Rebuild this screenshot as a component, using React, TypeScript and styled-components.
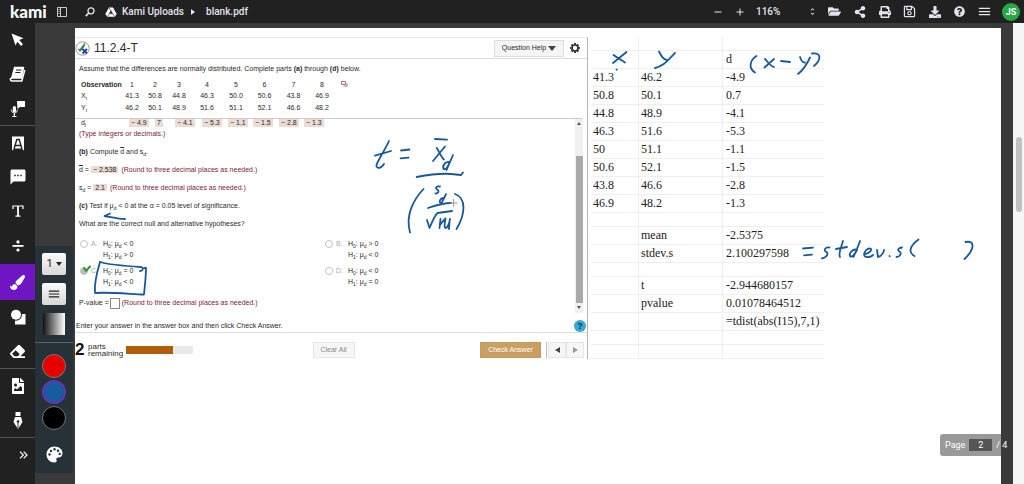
import React from "react";
import styled, { createGlobalStyle } from "styled-components";
import {
  FaFolderOpen,
  FaShareAlt,
  FaPrint,
  FaRegSave,
  FaDownload,
  FaQuestionCircle,
  FaPaintBrush,
  FaEraser,
  FaFileImage,
} from "react-icons/fa";
import { MdMenu, MdTextsms, MdAdd, MdRemove, MdUnfoldMore } from "react-icons/md";

const GlobalStyle = createGlobalStyle`
  * { box-sizing: border-box; }
  body { margin: 0; background: #3a3a3a; font-family: "Liberation Sans", Arial, sans-serif; }
  button, input, select { font: inherit; color: inherit; margin: 0; padding: 0; border: 0; background: none; }
  svg { display: block; }
`;

const Shell = styled.div`
  display: flex;
  flex-direction: column;
  min-height: 100vh;
`;

/* ---------- top bar ---------- */

const TopBar = styled.header`
  display: flex;
  align-items: center;
  height: 23px;
  padding: 0 4px 0 10px;
  background: #212121;
  color: #e4e4ee;
  font: 500 10px/12px Roboto, "Liberation Sans", sans-serif;
`;

const Logo = styled.a`
  width: 46px;
  color: #fff;
  font: 900 17px/20px Lato, sans-serif;
  text-decoration: none;
`;

const IconButton = styled.button<{ $w?: number }>`
  display: flex;
  align-items: center;
  justify-content: center;
  width: ${(p) => p.$w ?? 25}px;
  height: 22px;
`;

const LeftTools = styled.div`
  display: flex;
  gap: 16px;
`;

const Crumbs = styled.nav`
  display: flex;
  align-items: center;
  margin-left: 9px;

  a {
    margin-left: 5px;
    color: inherit;
    text-decoration: none;
  }
`;

const CrumbArrow = styled.span`
  margin: 0 11px 0 7px;
  border: 3px solid transparent;
  border-left: 4px solid #e4e4ee;
  border-right: 0;
`;

const Spacer = styled.div`
  flex: 1;
`;

const ZoomBox = styled.label`
  display: flex;
  align-items: center;
  justify-content: space-between;
  width: 61px;
  margin: 0 5px 0 5px;

  select {
    flex: 1;
    appearance: none;
    font-size: 10px;
  }
`;

const Avatar = styled.button`
  width: 18px;
  height: 18px;
  margin-left: 5px;
  border-radius: 50%;
  background: #2aa745;
  color: #fff;
  font: 700 9px/18px Roboto, sans-serif;
`;

/* ---------- left tools ---------- */

const Workspace = styled.div`
  display: flex;
  flex: 1;
`;

const Rail = styled.aside`
  width: 35px;
  background: #212121;
  color: #fff;
`;

const Group = styled.div`
  border-bottom: 1px solid #555;
`;

const Tool = styled.button<{ $tall?: boolean; $active?: boolean; $end?: boolean }>`
  display: flex;
  align-items: center;
  justify-content: ${(p) => (p.$end ? "flex-end" : "center")};
  width: 100%;
  height: ${(p) => (p.$tall ? 36 : 34)}px;
  padding-right: ${(p) => (p.$end ? 7 : 0)}px;
  background: ${(p) => (p.$active ? "#6f16c4" : "transparent")};
`;

const Gutter = styled.div`
  width: 40px;
  padding: 223px 2px 0 0;
`;

const Palette = styled.div`
  display: flex;
  flex-direction: column;
  align-items: center;
  height: 227px;
  padding-top: 7px;
  background: #263237;
`;

const PenButton = styled.button`
  display: flex;
  align-items: center;
  justify-content: center;
  gap: 3px;
  width: 24px;
  height: 22px;
  margin-bottom: 8px;
  border-radius: 2px;
  background: linear-gradient(#fafafa, #d8d8d8);
  color: #222;
  font: 11px/22px Roboto, sans-serif;
`;

const Caret = styled.span`
  border: 3px solid transparent;
  border-top: 4px solid #222;
  border-bottom: 0;
`;

const Opacity = styled.button`
  width: 22px;
  height: 22px;
  background: linear-gradient(90deg, #111, #fff);
`;

const PaletteRule = styled.hr`
  width: 100%;
  margin: 7px 0 11px;
  border: 0;
  border-top: 1px solid #5a6468;
`;

const Swatch = styled.button<{ $color: string; $on?: boolean }>`
  width: 24px;
  height: 24px;
  margin-bottom: 2px;
  border: ${(p) => (p.$on ? "2px solid #5f35b5" : "1px solid #777")};
  border-radius: 50%;
  background: ${(p) => p.$color};
`;

const MoreColors = styled.button`
  margin-top: 14px;
  color: #fff;
`;

/* ---------- document ---------- */

const Page = styled.main`
  position: relative;
  display: flex;
  align-items: flex-start;
  flex: 1;
  margin-top: 5px;
  padding-top: 9px;
  background: #fff;
  overflow: hidden;
`;

const RightGutter = styled.div`
  width: 12px;
`;

const ScrollTrack = styled.div`
  width: 11px;
  padding: 114px 2px 0 3px;
  background: #f7f7f7;
`;

const ScrollThumb = styled.div`
  height: 75px;
  border-radius: 3px;
  background: #c1c1c1;
`;

const Ink = styled.svg`
  position: absolute;
  top: 0;
  left: 0;
  pointer-events: none;
`;

const PageBadge = styled.label`
  position: absolute;
  right: 18px;
  bottom: 28px;
  display: flex;
  align-items: center;
  gap: 4px;
  height: 22px;
  width: 66px;
  padding-left: 5px;
  border-radius: 3px;
  background: rgba(60, 60, 60, 0.52);
  color: #fff;
  font: 9px/12px Roboto, sans-serif;
  white-space: nowrap;

  input {
    width: 23px;
    height: 12px;
    background: #555;
    text-align: center;
  }
`;

/* ---------- exercise ---------- */

const Exercise = styled.section`
  flex: 0 0 513px;
  height: 322px;
  border-top: 1px solid #e8e8e8;
  border-right: 1px solid #b5b5b5;
  color: #2b2b2b;
  font-size: 7px;
  line-height: 10px;
`;

const ExHead = styled.div`
  display: flex;
  align-items: center;
  height: 21px;
  padding-right: 7px;
  border-bottom: 1px solid #ddd;
`;

const Title = styled.h1`
  flex: 1;
  margin: 0 0 0 4px;
  font-size: 12px;
  line-height: 14px;
  font-weight: 400;
`;

const HelpButton = styled.button`
  display: flex;
  align-items: center;
  justify-content: center;
  gap: 2px;
  width: 70px;
  height: 17px;
  margin-right: 6px;
  border: 1px solid #ddd;
  background: #f5f5f5;
`;

const DownArrow = styled.span`
  border: 4px solid transparent;
  border-top: 5px solid #444;
  border-bottom: 0;
`;

const Given = styled.div`
  height: 59px;
  padding: 5px 0 0 4px;

  p {
    margin: 0 0 6px;
  }
`;

const ObsTable = styled.table`
  table-layout: fixed;
  width: 273px;
  border-spacing: 0;

  th,
  td {
    height: 12px;
    padding: 0;
    text-align: center;
    font-weight: 400;
    line-height: 10px;
  }
  tbody th,
  thead th:first-child {
    padding-left: 2px;
    text-align: left;
  }
  thead th:first-child {
    font-weight: 700;
  }
  thead th {
    height: 10px;
  }
  sub {
    font-size: 5px;
    line-height: 1px;
  }
`;

const ScrollArea = styled.div`
  display: flex;
  height: 195px;
  margin-right: 4px;
  border-top: 1px solid #ccc;
`;

const Questions = styled.div`
  flex: 1;
  padding-left: 4px;
`;

const DiffRow = styled.div`
  display: grid;
  grid-template-columns: 50px 26px 20px 27px 26px 25px 26px 25px 18px;
  height: 8px;
  margin-bottom: 2px;
  line-height: 8px;

  sub {
    font-size: 5px;
    line-height: 1px;
  }
`;

const Answer = styled.span<{ $inline?: boolean }>`
  justify-self: start;
  padding: 0 2px;
  background: #ecdcd3;
  white-space: nowrap;
  margin-right: ${(p) => (p.$inline ? 3 : 0)}px;
`;

const Line = styled.p<{ $note?: boolean }>`
  margin: 0 0 8px;
  color: ${(p) => (p.$note ? "#7a2438" : "inherit")};
  height: 10px;

  sub {
    font-size: 5px;
    line-height: 1px;
  }
`;

const Note = styled.span`
  color: #7a2438;
`;

const Over = styled.span`
  text-decoration: overline;
`;

const Choices = styled.div`
  display: grid;
  grid-template-columns: 245px 1fr;
  row-gap: 5px;
  margin-bottom: 11px;
  padding-top: 1px;
`;

const Choice = styled.label`
  display: flex;
  line-height: 11px;

  input {
    appearance: none;
    width: 8px;
    height: 8px;
    margin: 2px 3px 0 1px;
    border: 1px solid #c4c4c4;
    border-radius: 50%;
  }
  input:checked {
    background: #bbb;
  }
  sub {
    font-size: 5px;
    line-height: 1px;
  }
`;

const Letter = styled.span`
  width: 12px;
  color: #aaa;
`;

const Blank = styled.input`
  && {
    width: 10px;
    height: 11px;
    margin: 0 2px 0 1px;
    border: 1px solid #888;
    vertical-align: middle;
  }
`;

const InnerTrack = styled.div`
  display: flex;
  flex-direction: column;
  align-items: center;
  width: 8px;
  padding: 3px 0;
  background: #f0f0f0;
`;

const InnerThumb = styled.div`
  width: 7px;
  height: 147px;
  margin: 31px 0 3px;
  background: #a9a9a9;
`;

const TinyArrow = styled.span<{ $down?: boolean }>`
  border: 2px solid transparent;
  border-${(p) => (p.$down ? "top" : "bottom")}: 3px solid #555;
  border-${(p) => (p.$down ? "bottom" : "top")}: 0;
`;

const Prompt = styled.div`
  display: flex;
  align-items: center;
  justify-content: space-between;
  height: 20px;
  padding: 6px 1px 0 1px;
  border-bottom: 1px solid #ddd;
`;

const RoundHelp = styled.button`
  width: 12px;
  height: 12px;
  border-radius: 50%;
  background: #35a9d6;
  color: #12344a;
  font: 700 9px/12px "Liberation Sans", sans-serif;
`;

const Footer = styled.div`
  display: flex;
  align-items: center;
  height: 25px;
  padding: 8px 3px 0 0;
`;

const Count = styled.strong`
  width: 13px;
  color: #111;
  font-size: 17px;
  line-height: 18px;
`;

const Remaining = styled.span`
  width: 38px;
  font-size: 8px;
  line-height: 7px;
`;

const Progress = styled.div`
  width: 67px;
  height: 8px;
  background: #e9e9e9;
`;

const ProgressFill = styled.div`
  width: 70%;
  height: 100%;
  background: #b05d08;
`;

const FootButton = styled.button<{ $kind?: "clear" | "primary" | "step" }>`
  display: flex;
  align-items: center;
  justify-content: center;
  width: ${(p) => (p.$kind === "primary" ? 61 : p.$kind === "step" ? 18 : 42)}px;
  height: 16px;
  margin-right: ${(p) => (p.$kind === "clear" ? 6 : 0)}px;
  border: 1px solid ${(p) => (p.$kind === "primary" ? "#c4995a" : "#e6e6e6")};
  background: ${(p) => (p.$kind === "primary" ? "#c9a064" : "#f6f6f6")};
  color: ${(p) => (p.$kind === "primary" ? "#fff" : "#888")};
`;

const Steps = styled.div`
  display: flex;
  margin-left: 5px;
  padding-left: 1px;
  border-left: 1px solid #bbb;
`;

const StepArrow = styled.span<{ $next?: boolean }>`
  border: 3px solid transparent;
  border-${(p) => (p.$next ? "left" : "right")}: 5px solid ${(p) => (p.$next ? "#999" : "#444")};
  border-${(p) => (p.$next ? "right" : "left")}: 0;
`;

/* ---------- spreadsheet ---------- */

const Sheet = styled.table`
  table-layout: fixed;
  width: 233px;
  margin-left: 3px;
  border-spacing: 0;
  color: #222;
  font: 12px/17px "Liberation Serif", "Times New Roman", serif;

  td {
    padding: 0 0 0 2px;
    border-right: 1px solid #efefef;
    border-bottom: 1px solid #efefef;
    white-space: nowrap;
  }
  td:last-child {
    border-right: 0;
    padding-left: 3px;
  }
`;

const SheetRow = styled.tr<{ $empty?: boolean }>`
  height: ${(p) => (p.$empty ? 14 : 18)}px;
`;

const sheetRows: string[][] = [
  [],
  ["", "", "d"],
  ["41.3", "46.2", "-4.9"],
  ["50.8", "50.1", "0.7"],
  ["44.8", "48.9", "-4.1"],
  ["46.3", "51.6", "-5.3"],
  ["50", "51.1", "-1.1"],
  ["50.6", "52.1", "-1.5"],
  ["43.8", "46.6", "-2.8"],
  ["46.9", "48.2", "-1.3"],
  [],
  ["", "mean", "-2.5375"],
  ["", "stdev.s", "2.100297598"],
  [],
  ["", "t", "-2.944680157"],
  ["", "pvalue", "0.01078464512"],
  ["", "", "=tdist(abs(I15),7,1)"],
  [],
  [],
];

const observed: [string, string[]][] = [
  ["X", ["41.3", "50.8", "44.8", "46.3", "50.0", "50.6", "43.8", "46.9"]],
  ["Y", ["46.2", "50.1", "48.9", "51.6", "51.1", "52.1", "46.6", "48.2"]],
];
const diffs = ["− 4.9", "7", "− 4.1", "− 5.3", "− 1.1", "− 1.5", "− 2.8", "− 1.3"];
const obsWidths = [41, 24, 22, 26, 30, 28, 29, 29, 28, 16];

const choices = [
  { id: "A", h0: "< 0", h1: "> 0" },
  { id: "B", h0: "> 0", h1: "< 0" },
  { id: "C", h0: "= 0", h1: "< 0" },
  { id: "D", h0: "< 0", h1: "= 0" },
];

const strokes = [
  /* t = x̄d over s/√n */
  "M389 141C385 150 378 160 376.500 165C376 169 381 169 384 164M375 155.700L391 151",
  "M401 150.500L409.500 149.500M400.500 158.300L408.500 157.700",
  "M435 139L447 139.700M436.700 148C439 151 441 157 444 159.500M445 146.500L433 161",
  "M453 155C451 160 448 166 446.500 170M449.500 162C446 161 442 165 443.500 169C446 170 448 167 449.500 162",
  "M416.700 177C430 174.500 440 173 451 174L461 175L463 172.500",
  "M440 186.500C436 186 435 188 437 189.500C440 191 438 193.500 435.500 193.500",
  "M446 194C445 197 443 200 441.500 203M443.500 198C440 198 438.500 203 441 203",
  "M428 208C437 205 446 203 451 203",
  "M427 220L429.500 228C432 222 435 215 437.500 213L452 211",
  "M440.500 219L439.500 228M440 225C442 222 444 220 445.500 218.500C445 222 443.500 228 446 228C448 227 449.500 222 450 219M449.500 222L449 229",
  "M423.500 189C414 199 405 215 410 232.500M455 194C467 198 465 215 456.500 229",
  /* column headings */
  "M626.500 52L613 63M613.500 55C618 58 621 60 625 62.500",
  "M659 51.500C661 55 662 59 667 60M675 53C668 60 664 66 655 68",
  "M756.500 56C750 60 748 68 755 72.500M765 59C768 62 770 66 774 67M774 59L764.500 67.500M781 61L790 62",
  "M800 57C801 60 802 63 805 62.500M810 57.500C807 64 802 71 798 74M812 53.500C822 52 821 60 814 66",
  /* = stdev.s( ) */
  "M803 248.500L813 247.700M804 255.300L812 254.700",
  "M829.500 247.500C825 247 823 250.500 826.500 252C829 254 826 258 822 258.500",
  "M843 241C841 248 838 254 840 257M836 249L847 247",
  "M860 241C858 247 855 253 853.500 257M857 250C853 248 848 254 850.500 256.500C853 257 855 254 857 250",
  "M864 254C868 254 872 251 871 249C868 247 863 252 864.500 256C867 258 871 257 873 255",
  "M877 250L878 257C881 257 884 252 884 250M889.500 256L889.600 256.300",
  "M902 247.500C898 248 897 250 899.500 251.500C902 253 900 257 896.500 257",
  "M918.500 239.500C911 245 907 252 914.500 256M965.500 242C976 240 974 250 964.500 259",
  /* marks on the exercise */
  "M110 213.500L104.500 216C111 217 118 219 125 219",
  "M100 262C97 272 94 283 95 293C110 292 130 294 144 294.500C145 285 146 276 146 268L144 268",
  "M100 262C110 265 125 266 141 267C144 268 143 271 140 271",
];

const CursorIcon = () => (
  <svg width="13" height="14" viewBox="0 0 13 14" fill="#fff">
    <path d="M0.500 0.500L12.500 5.200L8.200 7L12 11.200L10 13L6.300 8.800L4.500 12.500Z" />
  </svg>
);
const BookIcon = () => (
  <svg width="17" height="17" viewBox="0 0 17 17">
    <path d="M5 1.500H14.500L12 12H3.500Q1.500 12 1.300 13Q1.300 14.800 3 15H12.800L15.800 4" fill="none" stroke="#fff" strokeWidth="1.500" strokeLinejoin="round" />
    <path d="M5 1H14.800L12 12H2Z" fill="#fff" />
    <path d="M7 4H12.500M6.300 6.500H11.500" stroke="#212121" strokeWidth="1" />
  </svg>
);
const MicIcon = () => (
  <svg width="15" height="17" viewBox="0 0 15 17" fill="#fff">
    <rect x="2.800" y="6" width="3.200" height="6.500" rx="1.600" />
    <path d="M1.300 9.500Q1.300 13 4.400 13Q7.500 13 7.500 9.500" fill="none" stroke="#fff" strokeWidth="0.800" />
    <path d="M3.800 13H5V16H6.500V17H2.300V16H3.800ZM7 1H15V7H10L7.500 9Z" />
  </svg>
);
const MarkIcon = () => (
  <svg width="12" height="15" viewBox="0 0 12 15">
    <path d="M0 0.500H12V14.500L9.500 12.500H2.500L0 14.500Z" fill="#fff" />
    <path d="M2 13L4.800 3.500H7.200L10 13M3.300 9.500H8.700" fill="none" stroke="#212121" strokeWidth="1.400" />
  </svg>
);
const TypeIcon = () => (
  <svg width="12" height="12" viewBox="0 0 12 12" fill="none" stroke="#fff">
    <path d="M6 1V11" strokeWidth="1.800" />
    <path d="M1 4V1H11V4M3.500 11.200H8.500" strokeWidth="1.200" />
  </svg>
);
const DivideIcon = () => (
  <svg width="12" height="12" viewBox="0 0 12 12" fill="#fff">
    <rect x="0.500" y="5" width="11" height="1.800" />
    <circle cx="6" cy="1.900" r="1.600" />
    <circle cx="6" cy="10" r="1.600" />
  </svg>
);
const ShapesIcon = () => (
  <svg width="16" height="16" viewBox="0 0 16 16">
    <path d="M7 5H15.500V15.500H5V9Z" fill="#fff" />
    <circle cx="6" cy="5.800" r="6" fill="#212121" />
    <circle cx="6" cy="5.800" r="5" fill="#fff" />
  </svg>
);
const PenIcon = () => (
  <svg width="10" height="17" viewBox="0 0 10 17">
    <path d="M2.500 0H7.500V4H2.500ZM2 5H8L9.500 10L5 17L0.500 10Z" fill="#fff" />
    <path d="M5 10V16" stroke="#212121" strokeWidth="0.900" />
    <circle cx="5" cy="9.500" r="1.300" fill="#212121" />
  </svg>
);
const ChevronsIcon = () => (
  <svg width="9" height="8" viewBox="0 0 9 8" fill="none" stroke="#fff" strokeWidth="1.200">
    <path d="M1 0.700L4.300 4L1 7.300M4.700 0.700L8 4L4.700 7.300" />
  </svg>
);
const PaletteIcon = () => (
  <svg width="17" height="17" viewBox="0 0 17 17">
    <path d="M8.500 0.500C13 0.500 16.500 3.300 16.500 7.200C16.500 10 14.500 11.500 12.300 11.500C10.500 11.500 9.800 12.500 10.500 13.800C11.200 15.200 10.200 16.500 8.500 16.500C4 16.500 0.500 13 0.500 8.500C0.500 4 4 0.500 8.500 0.500Z" fill="#fff" />
    <g fill="#263237">
      <circle cx="3.500" cy="8.500" r="1.200" />
      <circle cx="5" cy="5" r="1.200" />
      <circle cx="8.500" cy="3.300" r="1.200" />
      <circle cx="12" cy="4.800" r="1.200" />
      <circle cx="13.700" cy="7.900" r="1.200" />
    </g>
  </svg>
);
const PanelIcon = () => (
  <svg width="10" height="10" viewBox="0 0 10 10" fill="none" stroke="#c8c8d0">
    <path d="M0.500 0.500H9.500V9.500H0.500ZM3.500 0.500V9.500" />
    <path d="M1 2.500H3M1 4.500H3M1 6.500H3" strokeWidth="0.600" />
  </svg>
);
const SearchIcon = () => (
  <svg width="10" height="10" viewBox="0 0 10 10" fill="none" stroke="#e4e4ee" strokeWidth="1.300">
    <circle cx="6" cy="3.800" r="3" />
    <path d="M3.800 6L0.700 9.200" strokeWidth="1.700" />
  </svg>
);
const DriveIcon = () => (
  <svg width="12" height="10" viewBox="0 0 12 10">
    <path d="M4 0.500H8L11.700 7L9.800 9.700H2.200L0.300 7Z" fill="#fff" />
    <path d="M4.200 1L7.500 6.700M9.600 9.500L8 6.700H4.300L2.400 9.500M4.300 6.700L6.200 3.600" stroke="#212121" strokeWidth="0.600" fill="none" />
    <path d="M6 3.800L7.500 6.500H4.500Z" fill="#212121" />
  </svg>
);
const GearIcon = () => (
  <svg width="10" height="10" viewBox="-6 -6 12 12" fill="none" stroke="#333">
    <circle r="3.600" strokeWidth="2" />
    {[0, 45, 90, 135].map((a) => (
      <path key={a} d="M0 -5.900V-4M0 5.900V4" strokeWidth="2.400" transform={`rotate(${a})`} />
    ))}
  </svg>
);
const TitleIcon = () => (
  <svg width="15" height="15" viewBox="0 0 15 15" fill="none">
    <circle cx="7.500" cy="7.500" r="6.700" fill="#fff" stroke="#999" />
    <path d="M3 8L5 9L10 2.500M4.500 10.500L9.500 4.500" stroke="#2c8a3c" strokeWidth="1.300" />
    <path d="M7.500 8L12 12.500M12 8L7.500 12.500" stroke="#2b35b8" strokeWidth="1.900" />
  </svg>
);
const PopupIcon = () => (
  <svg width="8" height="7" viewBox="0 0 8 7" fill="none" stroke="#b0475a" strokeWidth="0.800">
    <path d="M1.500 1.500H5.500V4.500H1.500ZM3.500 6H7V3" />
  </svg>
);

export default function App() {
  return (
    <Shell>
      <GlobalStyle />
      <TopBar>
        <Logo href="#">kami</Logo>
        <LeftTools>
          <IconButton $w={12} aria-label="Toggle sidebar"><PanelIcon /></IconButton>
          <IconButton $w={12} aria-label="Search"><SearchIcon /></IconButton>
        </LeftTools>
        <Crumbs>
          <DriveIcon />
          <a href="#">Kami Uploads</a>
          <CrumbArrow />
          <span>blank.pdf</span>
        </Crumbs>
        <Spacer />
        <IconButton $w={22} aria-label="Zoom out"><MdRemove size={12} /></IconButton>
        <IconButton $w={22} aria-label="Zoom in"><MdAdd size={12} /></IconButton>
        <ZoomBox>
          <select aria-label="Zoom level" defaultValue="116%"><option>116%</option></select>
          <MdUnfoldMore size={9} />
        </ZoomBox>
        <IconButton aria-label="Open"><FaFolderOpen size={13} /></IconButton>
        <IconButton aria-label="Share"><FaShareAlt size={12} /></IconButton>
        <IconButton aria-label="Print"><FaPrint size={12} /></IconButton>
        <IconButton aria-label="Save"><FaRegSave size={13} /></IconButton>
        <IconButton aria-label="Download"><FaDownload size={12} /></IconButton>
        <IconButton aria-label="Help"><FaQuestionCircle size={11} /></IconButton>
        <IconButton aria-label="Menu"><MdMenu size={15} /></IconButton>
        <Avatar>JS</Avatar>
      </TopBar>

      <Workspace>
        <Rail>
          <Group>
            <Tool aria-label="Select"><CursorIcon /></Tool>
            <Tool aria-label="Dictionary"><BookIcon /></Tool>
            <Tool aria-label="Read aloud"><MicIcon /></Tool>
          </Group>
          <div>
            <Tool aria-label="Markup"><MarkIcon /></Tool>
            <Tool aria-label="Comment"><MdTextsms size={18} /></Tool>
            <Tool aria-label="Text box"><TypeIcon /></Tool>
            <Tool $tall aria-label="Equation"><DivideIcon /></Tool>
            <Tool $tall $active aria-label="Drawing"><FaPaintBrush size={15} /></Tool>
            <Tool aria-label="Shapes"><ShapesIcon /></Tool>
          </div>
          <Group>
            <Tool aria-label="Eraser"><FaEraser size={15} /></Tool>
          </Group>
          <Group>
            <Tool aria-label="Image"><FaFileImage size={16} /></Tool>
            <Tool aria-label="Signature"><PenIcon /></Tool>
          </Group>
          <Tool $end aria-label="Expand"><ChevronsIcon /></Tool>
        </Rail>

        <Gutter>
          <Palette>
            <PenButton aria-label="Stroke size">1<Caret /></PenButton>
            <PenButton aria-label="Stroke style"><MdMenu size={14} /></PenButton>
            <Opacity aria-label="Opacity" />
            <PaletteRule />
            <Swatch $color="#e60000" aria-label="Red" />
            <Swatch $color="#175c9c" $on aria-label="Blue" />
            <Swatch $color="#000" aria-label="Black" />
            <MoreColors aria-label="More colors"><PaletteIcon /></MoreColors>
          </Palette>
        </Gutter>

        <Page>
          <Exercise>
            <ExHead>
              <TitleIcon />
              <Title>11.2.4-T</Title>
              <HelpButton>Question Help <DownArrow /></HelpButton>
              <button aria-label="Settings"><GearIcon /></button>
            </ExHead>
            <Given>
              <p>
                Assume that the differences are normally distributed. Complete parts <b>(a)</b> through <b>(d)</b> below.
              </p>
              <ObsTable>
                <colgroup>
                  {obsWidths.map((w, i) => <col key={i} width={w} />)}
                </colgroup>
                <thead>
                  <tr>
                    <th>Observation</th>
                    {[1, 2, 3, 4, 5, 6, 7, 8].map((n) => <th key={n}>{n}</th>)}
                    <th><button aria-label="Open data"><PopupIcon /></button></th>
                  </tr>
                </thead>
                <tbody>
                  {observed.map(([name, values]) => (
                    <tr key={name}>
                      <th>{name}<sub>i</sub></th>
                      {values.map((v, i) => <td key={i}>{v}</td>)}
                    </tr>
                  ))}
                </tbody>
              </ObsTable>
            </Given>
            <ScrollArea>
              <Questions>
                <DiffRow>
                  <span>&nbsp;d<sub>i</sub></span>
                  {diffs.map((d, i) => <Answer key={i}>{d}</Answer>)}
                </DiffRow>
                <Line $note>(Type integers or decimals.)</Line>
                <Line><b>(b)</b> Compute <Over>d</Over> and s<sub>d</sub>.</Line>
                <Line><Over>d</Over> = <Answer $inline>− 2.538</Answer><Note>(Round to three decimal places as needed.)</Note></Line>
                <Line>s<sub>d</sub> = <Answer $inline>2.1</Answer><Note>(Round to three decimal places as needed.)</Note></Line>
                <Line><b>(c)</b> Test if μ<sub>d</sub> &lt; 0 at the α = 0.05 level of significance.</Line>
                <Line>What are the correct null and alternative hypotheses?</Line>
                <Choices>
                  {choices.map((c) => (
                    <Choice key={c.id}>
                      <input type="radio" name="hypotheses" defaultChecked={c.id === "C"} />
                      <Letter>{c.id}.</Letter>
                      <span>
                        H<sub>0</sub>: μ<sub>d</sub> {c.h0}
                        <br />
                        H<sub>1</sub>: μ<sub>d</sub> {c.h1}
                      </span>
                    </Choice>
                  ))}
                </Choices>
                <Line>
                  <label htmlFor="pvalue">P-value =</label>
                  <Blank id="pvalue" />
                  <Note>(Round to three decimal places as needed.)</Note>
                </Line>
              </Questions>
              <InnerTrack>
                <TinyArrow />
                <InnerThumb />
                <TinyArrow $down />
              </InnerTrack>
            </ScrollArea>
            <Prompt>
              <span>Enter your answer in the answer box and then click Check Answer.</span>
              <RoundHelp aria-label="Help">?</RoundHelp>
            </Prompt>
            <Footer>
              <Count>2</Count>
              <Remaining>parts remaining</Remaining>
              <Progress><ProgressFill /></Progress>
              <Spacer />
              <FootButton $kind="clear">Clear All</FootButton>
              <Spacer />
              <FootButton $kind="primary">Check Answer</FootButton>
              <Steps>
                <FootButton $kind="step" aria-label="Previous"><StepArrow /></FootButton>
                <FootButton $kind="step" aria-label="Next"><StepArrow $next /></FootButton>
              </Steps>
            </Footer>
          </Exercise>

          <Sheet>
            <colgroup>
              <col width={48} />
              <col width={84} />
              <col width={101} />
            </colgroup>
            <tbody>
              {sheetRows.map((row, r) => (
                <SheetRow key={r} $empty={row.length === 0}>
                  {[0, 1, 2].map((c) => <td key={c}>{row[c]}</td>)}
                </SheetRow>
              ))}
            </tbody>
          </Sheet>

          <Ink width="926" height="456" viewBox="75 28 926 456" fill="none" stroke="#17599c" strokeWidth="1.800" strokeLinecap="round" strokeLinejoin="round">
            {strokes.map((d) => <path key={d} d={d} />)}
            <circle cx="616.500" cy="69.700" r="0.600" strokeWidth="1" />
            <path d="M84 268L86 271L90 266.500" stroke="#2f9a35" strokeWidth="2" />
            <path d="M450.500 203H457M453.700 199.500V206.500" stroke="#999" strokeWidth="1" />
          </Ink>
        </Page>
        <RightGutter />
        <ScrollTrack><ScrollThumb /></ScrollTrack>
      </Workspace>
      <PageBadge>
        Page <input aria-label="Page number" defaultValue="2" /> / 4
      </PageBadge>
    </Shell>
  );
}
